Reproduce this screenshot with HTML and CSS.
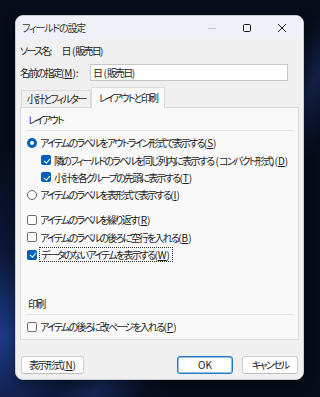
FILE: index.html
```html
<!DOCTYPE html>
<html lang="ja">
<head>
<meta charset="utf-8">
<link rel="stylesheet" href="styles.css">
</head>
<body>
<div class="desk">
  <div class="dlg">
    <div class="titlebar">
      <span class="title">フィールドの設定</span>
      <div class="ctrls">
        <svg class="ctl" width="10" height="10" viewBox="0 0 10 10"><path d="M1 5.5H9" stroke="#c4c4c4" stroke-width="1"/></svg>
        <svg class="ctl" width="10" height="10" viewBox="0 0 10 10"><rect x="1.5" y="1.5" width="7" height="7" rx="1" fill="none" stroke="#1b1b1b" stroke-width="1"/></svg>
        <svg class="ctl" width="10" height="10" viewBox="0 0 10 10"><path d="M1 1L9 9M9 1L1 9" stroke="#1b1b1b" stroke-width="1"/></svg>
      </div>
    </div>
    <div class="body">
      <div class="src"><span class="srclabel">ソース名<span class="h">:</span></span><span>日<span class="h"> (</span>販売日<span class="h">)</span></span></div>
      <div class="namerow">
        <span class="namelabel">名前の指定<span class="h">(<u>M</u>):</span></span>
        <div class="input">日<span class="h"> (</span>販売日<span class="h">)</span></div>
      </div>
      <div class="tabs">
        <div class="tab">小計とフィルター</div>
        <div class="tab sel">レイアウトと印刷</div>
      </div>
      <div class="panel">
        <div class="grp">レイアウト</div>
        <div class="row"><span class="radio on"></span><span>アイテムのラベルをアウトライン形式で表示する<span class="h">(<u>S</u>)</span></span></div>
        <div class="row sub"><span class="cb on"></span><span>隣のフィールドのラベルを同じ列内に表示する<span class="h"> (</span>コンパクト形式<span class="h">)(<u>D</u>)</span></span></div>
        <div class="row sub"><span class="cb on"></span><span>小計を各グループの先頭に表示する<span class="h">(<u>T</u>)</span></span></div>
        <div class="row"><span class="radio"></span><span>アイテムのラベルを表形式で表示する<span class="h">(<u>I</u>)</span></span></div>
        <div class="row gap"><span class="cb"></span><span>アイテムのラベルを繰り返す<span class="h">(<u>R</u>)</span></span></div>
        <div class="row"><span class="cb"></span><span>アイテムのラベルの後ろに空行を入れる<span class="h">(<u>B</u>)</span></span></div>
        <div class="row"><span class="cb on"></span><span class="focus">データのないアイテムを表示する<span class="h">(<u>W</u>)</span></span></div>
        <div class="spacer"></div>
        <div class="grp">印刷</div>
        <div class="row"><span class="cb"></span><span>アイテムの後ろに改ページを入れる<span class="h">(<u>P</u>)</span></span></div>
      </div>
      <div class="btns">
        <div class="btn fmt">表示形式<span class="h">(<u>N</u>)</span></div>
        <div class="grow"></div>
        <div class="btn ok">OK</div>
        <div class="btn cancel">キャンセル</div>
      </div>
    </div>
  </div>
</div>
</body>
</html>
```

FILE: styles.css
```css
* { box-sizing: border-box; }
html, body { margin: 0; padding: 0; }
body {
  width: 320px;
  height: 397px;
  overflow: hidden;
  font-family: "Noto Sans CJK JP", "Noto Sans", sans-serif;
  font-size: 10px;
  letter-spacing: -1.75px;
  font-feature-settings: "palt" 1;
  color: #1a1a1a;
}
.h { letter-spacing: 0; }
.desk {
  width: 320px;
  height: 397px;
  padding: 15px 0 0 15px;
  background:
    linear-gradient(125deg, transparent 55%, rgba(40,70,150,0.35) 62%, transparent 70%),
    radial-gradient(ellipse at 0% 85%, #1d3a86 0%, rgba(20,40,100,0.4) 18%, transparent 40%),
    #070c1a;
}
.dlg {
  width: 289px;
  height: 365px;
  background: #f0f0f0;
  border: 1px solid #c9ccd3;
  border-radius: 8px;
  overflow: hidden;
  display: flex;
  flex-direction: column;
  box-shadow: 0 4px 12px rgba(0,0,0,0.4);
}
.titlebar {
  height: 23px;
  flex: none;
  background: #eef1f8;
  display: flex;
  align-items: center;
  padding-left: 6px;
}
.title { color: #333; letter-spacing: -1.2px; }
.ctrls {
  margin-left: auto;
  display: flex;
  gap: 25px;
  padding-right: 16px;
}
.ctl { display: block; }
.body {
  flex: 1;
  display: flex;
  flex-direction: column;
  padding: 3px 5px 0 4px;
}
.src { height: 18px; line-height: 18px; display: flex; white-space: nowrap; }
.srclabel { margin-right: 9px; }
.namerow {
  display: flex;
  align-items: center;
  margin-top: 3px;
  height: 18px;
  white-space: nowrap;
}
.namelabel { width: 70px; flex: none; }
.input {
  width: 198px;
  height: 17px;
  line-height: 15px;
  background: #fff;
  border: 1px solid #c6c6c6;
  padding-left: 2px;
}
.tabs {
  display: flex;
  align-items: flex-end;
  margin-top: 6px;
  height: 20px;
  padding-left: 1px;
  position: relative;
  z-index: 1;
  white-space: nowrap;
}
.tab {
  height: 17px;
  line-height: 16px;
  width: 70px;
  text-align: center;
  background: #f0f0f0;
  border: 1px solid #dadada;
  border-bottom: none;
}
.tab.sel {
  width: 74px;
  line-height: 19px;
  background: #f9f9f9;
  border-color: #dcdcdc;
  margin-bottom: -1px;
  height: 21px;
}
.panel {
  width: 279px;
  height: 233px;
  background: #f9f9f9;
  border: 1px solid #dcdcdc;
  padding: 3px 5px 0 6px;
  display: flex;
  flex-direction: column;
}
.grp {
  height: 20px;
  line-height: 18px;
  border-bottom: 1px solid #e3e3e3;
  padding-left: 1px;
  margin-bottom: 3px;
}
.row {
  height: 17.4px;
  display: flex;
  align-items: center;
  white-space: nowrap;
}
.row.sub { padding-left: 14px; }
.row.gap { margin-top: 7.5px; }
.spacer { height: 32px; }
.radio, .cb {
  width: 10px;
  height: 10px;
  flex: none;
  margin-right: 3px;
  position: relative;
}
.radio {
  border-radius: 50%;
  border: 1px solid #606060;
  background: #fff;
}
.radio.on {
  border: none;
  background: #005fb8;
}
.radio.on::after {
  content: "";
  position: absolute;
  left: 3px; top: 3px;
  width: 4px; height: 4px;
  border-radius: 50%;
  background: #fff;
}
.cb {
  border-radius: 2px;
  border: 1px solid #707070;
  background: #fff;
}
.cb.on {
  border: none;
  background: #005fb8;
}
.cb.on::after {
  content: "";
  position: absolute;
  left: 3.5px; top: 1.5px;
  width: 2.5px; height: 5px;
  border-right: 1.2px solid #fff;
  border-bottom: 1.2px solid #fff;
  transform: rotate(40deg);
}
.focus {
  outline: 1px dotted #333;
  outline-offset: 0;
  padding: 0 2px 0 1px;
  line-height: 13px;
}
u { text-decoration-thickness: 1px; text-underline-offset: 1px; }
.btns {
  display: flex;
  align-items: center;
  margin-top: 16px;
  padding-left: 1px;
  white-space: nowrap;
}
.grow { flex: 1; }
.btn {
  height: 18px;
  line-height: 16px;
  text-align: center;
  background: #fdfdfd;
  border: 1px solid #d0d0d0;
  border-bottom-color: #bdbdbd;
  border-radius: 3px;
}
.fmt { width: 63px; }
.ok { width: 56px; border-color: #2a78c8; box-shadow: inset 0 0 0 0.5px #2a78c8; letter-spacing: 0; }
.cancel { width: 56px; margin-left: 9px; }
```
